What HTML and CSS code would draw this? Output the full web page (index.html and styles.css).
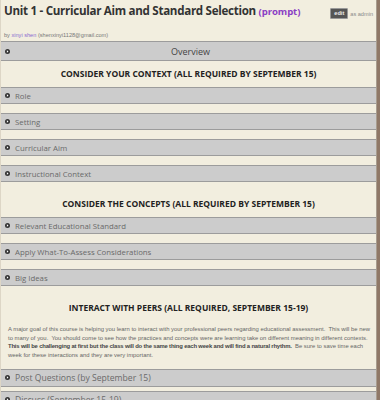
FILE: index.html
```html
<!DOCTYPE html>
<html lang="en">
<head>
  <meta charset="UTF-8">
  <title>Unit 1 - Curricular Aim and Standard Selection</title>
  <link rel="stylesheet" href="styles.css">
</head>
<body>

<div class="page">
  <!-- HEADER -->
  <div class="head">
    <h1 class="title">Unit 1 - Curricular Aim and Standard Selection <span class="kind">(prompt)</span></h1>
    <div class="admin"><span class="edit">edit</span> as admin</div>
  </div>
  <div class="byline">by <a href="#">xinyi shen</a> (shenxinyi1128@gmail.com)</div>

  <div class="bar bar-main">
    <svg class="ico" viewBox="0 0 10 10"><circle cx="5" cy="5" r="5"/><path d="M3.8 2.6 L7 5 L3.8 7.4 Z"/></svg>
    <span class="bar-text">Overview</span>
  </div>

  <!-- CONTEXT -->
  <h2 class="section">CONSIDER YOUR CONTEXT (ALL REQUIRED BY SEPTEMBER 15)</h2>
  <div class="bar"><svg class="ico" viewBox="0 0 10 10"><circle cx="5" cy="5" r="5"/><path d="M3.8 2.6 L7 5 L3.8 7.4 Z"/></svg>Role</div>
  <div class="bar"><svg class="ico" viewBox="0 0 10 10"><circle cx="5" cy="5" r="5"/><path d="M3.8 2.6 L7 5 L3.8 7.4 Z"/></svg>Setting</div>
  <div class="bar"><svg class="ico" viewBox="0 0 10 10"><circle cx="5" cy="5" r="5"/><path d="M3.8 2.6 L7 5 L3.8 7.4 Z"/></svg>Curricular Aim</div>
  <div class="bar"><svg class="ico" viewBox="0 0 10 10"><circle cx="5" cy="5" r="5"/><path d="M3.8 2.6 L7 5 L3.8 7.4 Z"/></svg>Instructional Context</div>

  <!-- CONCEPTS -->
  <h2 class="section">CONSIDER THE CONCEPTS (ALL REQUIRED BY SEPTEMBER 15)</h2>
  <div class="bar"><svg class="ico" viewBox="0 0 10 10"><circle cx="5" cy="5" r="5"/><path d="M3.8 2.6 L7 5 L3.8 7.4 Z"/></svg>Relevant Educational Standard</div>
  <div class="bar"><svg class="ico" viewBox="0 0 10 10"><circle cx="5" cy="5" r="5"/><path d="M3.8 2.6 L7 5 L3.8 7.4 Z"/></svg>Apply What-To-Assess Considerations</div>
  <div class="bar"><svg class="ico" viewBox="0 0 10 10"><circle cx="5" cy="5" r="5"/><path d="M3.8 2.6 L7 5 L3.8 7.4 Z"/></svg>Big Ideas</div>

  <!-- PEERS -->
  <h2 class="section">INTERACT WITH PEERS (ALL REQUIRED, SEPTEMBER 15-19)</h2>
  <p class="intro">A major goal of this course is helping you learn to interact with your professional peers regarding educational assessment.&nbsp; This will be new<br>to many of you.&nbsp; You should come to see how the practices and concepts were are learning take on different meaning in different contexts.<br><b>This will be challenging at first but the class will do the same thing each week and will find a natural rhythm.</b>&nbsp; Be sure to save time each<br>week for these interactions and they are very important.</p>
  <div class="bar bar-big"><svg class="ico" viewBox="0 0 10 10"><circle cx="5" cy="5" r="5"/><path d="M3.8 2.6 L7 5 L3.8 7.4 Z"/></svg>Post Questions (by September 15)</div>
  <div class="bar bar-big"><svg class="ico" viewBox="0 0 10 10"><circle cx="5" cy="5" r="5"/><path d="M3.8 2.6 L7 5 L3.8 7.4 Z"/></svg>Discuss (September 15-19)</div>
</div>

</body>
</html>
```

FILE: styles.css
```css
body {
  margin: 0;
  background: #8f7867;
  font-family: "Open Sans", Arial, sans-serif;
  color: #333;
}
.page {
  width: 377px;
  height: 400px;
  background: #f2eedf;
  border-right: 1px solid #a89d8f;
  border-left: 1px solid #ddd6c6;
  box-sizing: border-box;
  overflow: hidden;
}
.head {
  display: flex;
  justify-content: space-between;
  align-items: flex-start;
  padding: 2px 3px 0 3px;
}
.title {
  margin: 0;
  font-size: 11.6px;
  line-height: 18px;
  font-weight: 700;
  letter-spacing: -0.3px;
  color: #333;
  white-space: nowrap;
}
.kind { color: #8a3fc4; font-size: 9.6px; letter-spacing: -0.1px; }
.admin {
  display: flex;
  align-items: center;
  gap: 2px;
  margin-top: 6px;
  font-family: "Liberation Sans", Arial, sans-serif;
  font-size: 5.6px;
  color: #888;
}
.edit {
  background: #555;
  border: 1px solid #999;
  color: #eee;
  font-weight: 700;
  padding: 1px 3px;
  line-height: 7px;
  border-radius: 1px;
}
.byline {
  padding: 0 3px;
  margin-top: 10px;
  height: 10px;
  line-height: 8px;
  font-family: "Liberation Sans", Arial, sans-serif;
  font-size: 5.6px;
  color: #777;
}
.byline a { color: #8a6bd0; text-decoration: none; }

.bar {
  display: flex;
  align-items: center;
  gap: 5px;
  height: 17px;
  box-sizing: border-box;
  padding-left: 4px;
  margin-bottom: 9px;
  background: #cccccc;
  border-top: 1px solid #9c9c9c;
  border-bottom: 1px solid #9c9c9c;
  font-size: 7.8px;
  color: #6a6a6a;
}
.ico { width: 5px; height: 5px; flex: none; }
.ico circle { fill: #333; }
.ico path { fill: #fff; }
.bar-main {
  height: 20px;
  margin-bottom: 0;
  font-size: 9px;
  color: #444;
}
.bar-main .bar-text { flex: 1; text-align: center; padding-right: 10px; }
.bar-big { height: 18px; font-size: 8.6px; margin-bottom: 4px; }

.section {
  margin: 0;
  height: 26px;
  line-height: 26px;
  text-align: center;
  font-size: 8.5px;
  font-weight: 700;
  color: #222;
}
.intro {
  margin: 4px 0 9px;
  padding: 0 0 0 7px;
  font-family: "Liberation Sans", Arial, sans-serif;
  font-size: 5.9px;
  line-height: 8.7px;
  color: #666;
  white-space: nowrap;
}
.intro b { color: #444; letter-spacing: -0.17px; }
```
